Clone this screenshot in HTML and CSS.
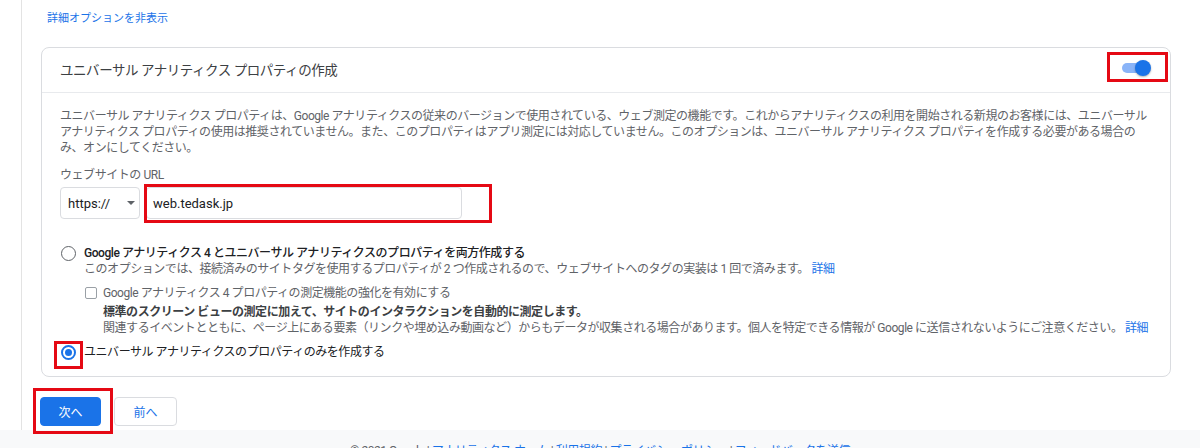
FILE: index.html
```html
<!DOCTYPE html>
<html lang="ja">
<head>
    <meta charset="UTF-8">
    <title>プロパティの設定</title>
    <link rel="stylesheet" href="styles.css">
</head>
<body>
    <div class="step-content">
        <a class="toggle-link" href="#">詳細オプションを非表示</a>

        <div class="card">
            <div class="card-header">
                <span class="card-title">ユニバーサル アナリティクス プロパティの作成</span>
                <span class="switch">
                    <span class="switch-track"></span>
                    <span class="switch-thumb"></span>
                    <span class="mark mark-switch"></span>
                </span>
            </div>

            <div class="card-body">
                <p class="intro">ユニバーサル アナリティクス プロパティは、Google アナリティクスの従来のバージョンで使用されている、ウェブ測定の機能です。これからアナリティクスの利用を開始される新規のお客様には、ユニバーサル<br>アナリティクス プロパティの使用は推奨されていません。また、このプロパティはアプリ測定には対応していません。このオプションは、ユニバーサル アナリティクス プロパティを作成する必要がある場合の<br>み、オンにしてください。</p>

                <div class="field-label">ウェブサイトの URL</div>
                <div class="url-row">
                    <div class="protocol">https://<span class="caret"></span></div>
                    <div class="url-input">web.tedask.jp</div>
                    <span class="mark mark-url"></span>
                </div>

                <div class="option">
                    <span class="radio"></span>
                    <div class="option-text">
                        <div class="option-label">Google アナリティクス 4 とユニバーサル アナリティクスのプロパティを両方作成する</div>
                        <div class="option-desc">このオプションでは、接続済みのサイトタグを使用するプロパティが 2 つ作成されるので、ウェブサイトへのタグの実装は 1 回で済みます。 <a href="#">詳細</a></div>

                        <div class="sub-option">
                            <span class="checkbox"></span>
                            <div>
                                <div class="sub-label">Google アナリティクス 4 プロパティの測定機能の強化を有効にする</div>
                                <div class="sub-strong">標準のスクリーン ビューの測定に加えて、サイトのインタラクションを自動的に測定します。</div>
                                <div class="option-desc">関連するイベントとともに、ページ上にある要素（リンクや埋め込み動画など）からもデータが収集される場合があります。個人を特定できる情報が Google に送信されないようにご注意ください。 <a href="#">詳細</a></div>
                            </div>
                        </div>
                    </div>
                </div>

                <div class="option option-last">
                    <span class="radio checked"><span class="mark mark-radio"></span></span>
                    <div class="option-label option-plain">ユニバーサル アナリティクスのプロパティのみを作成する</div>
                </div>
            </div>
        </div>

        <div class="actions">
            <button class="btn btn-primary">次へ<span class="mark mark-next"></span></button>
            <button class="btn">前へ</button>
        </div>
    </div>

    <footer class="footer">
        © 2021 Google | <a href="#">アナリティクス ホーム</a> | <a href="#">利用規約</a> | <a href="#">プライバシー ポリシー</a> | <a href="#">フィードバックを送信</a>
    </footer>
</body>
</html>
```

FILE: styles.css
```css
body {
    margin: 0;
    font-family: Roboto, "Noto Sans CJK JP", sans-serif;
    font-size: 12px;
    letter-spacing: -0.45px;
    color: #5f6368;
    background: #fff;
    overflow: hidden;
}

a {
    color: #1a73e8;
    text-decoration: none;
}

.step-content {
    margin-left: 21px;
    border-left: 1px solid #e3e3e3;
    padding: 11px 29px 4px 19px;
}

.toggle-link {
    display: inline-block;
    margin-left: 6px;
    font-size: 11px;
    letter-spacing: 0;
    line-height: 16px;
}

.card {
    margin-top: 20px;
    border: 1px solid #dadce0;
    border-radius: 8px;
}

.card-header {
    height: 44px;
    display: flex;
    align-items: center;
    justify-content: space-between;
    padding: 0 18px;
    border-bottom: 1px solid #e8eaed;
}

.card-title {
    font-size: 13.5px;
    letter-spacing: -0.45px;
    color: #3c4043;
    margin-top: -3px;
}

/* toggle switch */
.switch {
    position: relative;
    width: 30px;
    height: 16px;
    margin-top: -4px;
}

.switch-track {
    position: absolute;
    left: 0;
    top: 3px;
    width: 26px;
    height: 10px;
    border-radius: 5px;
    background: #8ab4f8;
}

.switch-thumb {
    position: absolute;
    right: 1px;
    top: 0;
    width: 16px;
    height: 16px;
    border-radius: 50%;
    background: #1a73e8;
    box-shadow: 0 1px 2px rgba(0,0,0,0.3);
}

/* red annotation boxes */
.mark {
    position: absolute;
    border: 3px solid #e50914;
    box-sizing: border-box;
    pointer-events: none;
}

.mark-switch {
    left: -15px;
    top: -8px;
    width: 61px;
    height: 30px;
}

.mark-url {
    left: 84px;
    top: -3px;
    width: 348px;
    height: 39px;
}

.mark-radio {
    left: -9px;
    top: -6px;
    width: 29px;
    height: 28px;
}

.mark-next {
    left: -8px;
    top: -10px;
    width: 80px;
    height: 46px;
}

.card-body {
    padding: 15px 18px 16px;
}

.intro {
    margin: 0 0 11px;
    line-height: 16px;
    white-space: nowrap;
}

.field-label {
    line-height: 16px;
}

.url-row {
    position: relative;
    display: flex;
    gap: 6px;
    margin-top: 4px;
}

.protocol {
    width: 80px;
    height: 32px;
    box-sizing: border-box;
    border: 1px solid #dadce0;
    border-radius: 4px;
    padding-left: 7px;
    display: flex;
    align-items: center;
    font-size: 13px;
    letter-spacing: 0;
    color: #202124;
}

.caret {
    margin-left: 17px;
    border-left: 4px solid transparent;
    border-right: 4px solid transparent;
    border-top: 4px solid #5f6368;
}

.url-input {
    width: 316px;
    height: 32px;
    box-sizing: border-box;
    border: 1px solid #dadce0;
    border-radius: 4px;
    padding-left: 6px;
    display: flex;
    align-items: center;
    font-size: 13px;
    letter-spacing: 0;
    color: #202124;
}

.option {
    display: flex;
    align-items: flex-start;
    margin-top: 26px;
    line-height: 16px;
}

.option-last {
    margin-top: 8px;
}

.radio {
    position: relative;
    flex: none;
    width: 15px;
    height: 15px;
    box-sizing: border-box;
    border: 1.5px solid #5f6368;
    border-radius: 50%;
    margin: 1px 8px 0 1px;
}

.radio.checked {
    border: 2px solid #1a73e8;
}

.radio.checked::after {
    content: "";
    position: absolute;
    left: 2px;
    top: 2px;
    width: 7px;
    height: 7px;
    border-radius: 50%;
    background: #1a73e8;
}

.option-label {
    font-weight: 500;
    color: #202124;
}

.option-plain {
    font-weight: 400;
}

.option-desc {
    white-space: nowrap;
}

.sub-option {
    display: flex;
    align-items: flex-start;
    margin-top: 8px;
}

.checkbox {
    flex: none;
    width: 12px;
    height: 12px;
    box-sizing: border-box;
    border: 1px solid #9aa0a6;
    border-radius: 2px;
    margin: 2px 6px 0 1px;
}

.sub-label {
    margin-bottom: 3px;
}

.sub-strong {
    font-weight: 700;
    color: #3c4043;
}

.actions {
    display: flex;
    gap: 13px;
    margin: 20px 0 0 -1px;
}

.btn {
    position: relative;
    height: 29px;
    width: 63px;
    border: 1px solid #dadce0;
    border-radius: 4px;
    background: #fff;
    color: #1a73e8;
    font-family: inherit;
    font-size: 12px;
    padding: 0;
}

.btn-primary {
    width: 61px;
    background: #1a73e8;
    border-color: #1a73e8;
    color: #fff;
}

.footer {
    background: #f8f9fa;
    height: 40px;
    padding-top: 13px;
    text-align: center;
    line-height: 16px;
}
```
